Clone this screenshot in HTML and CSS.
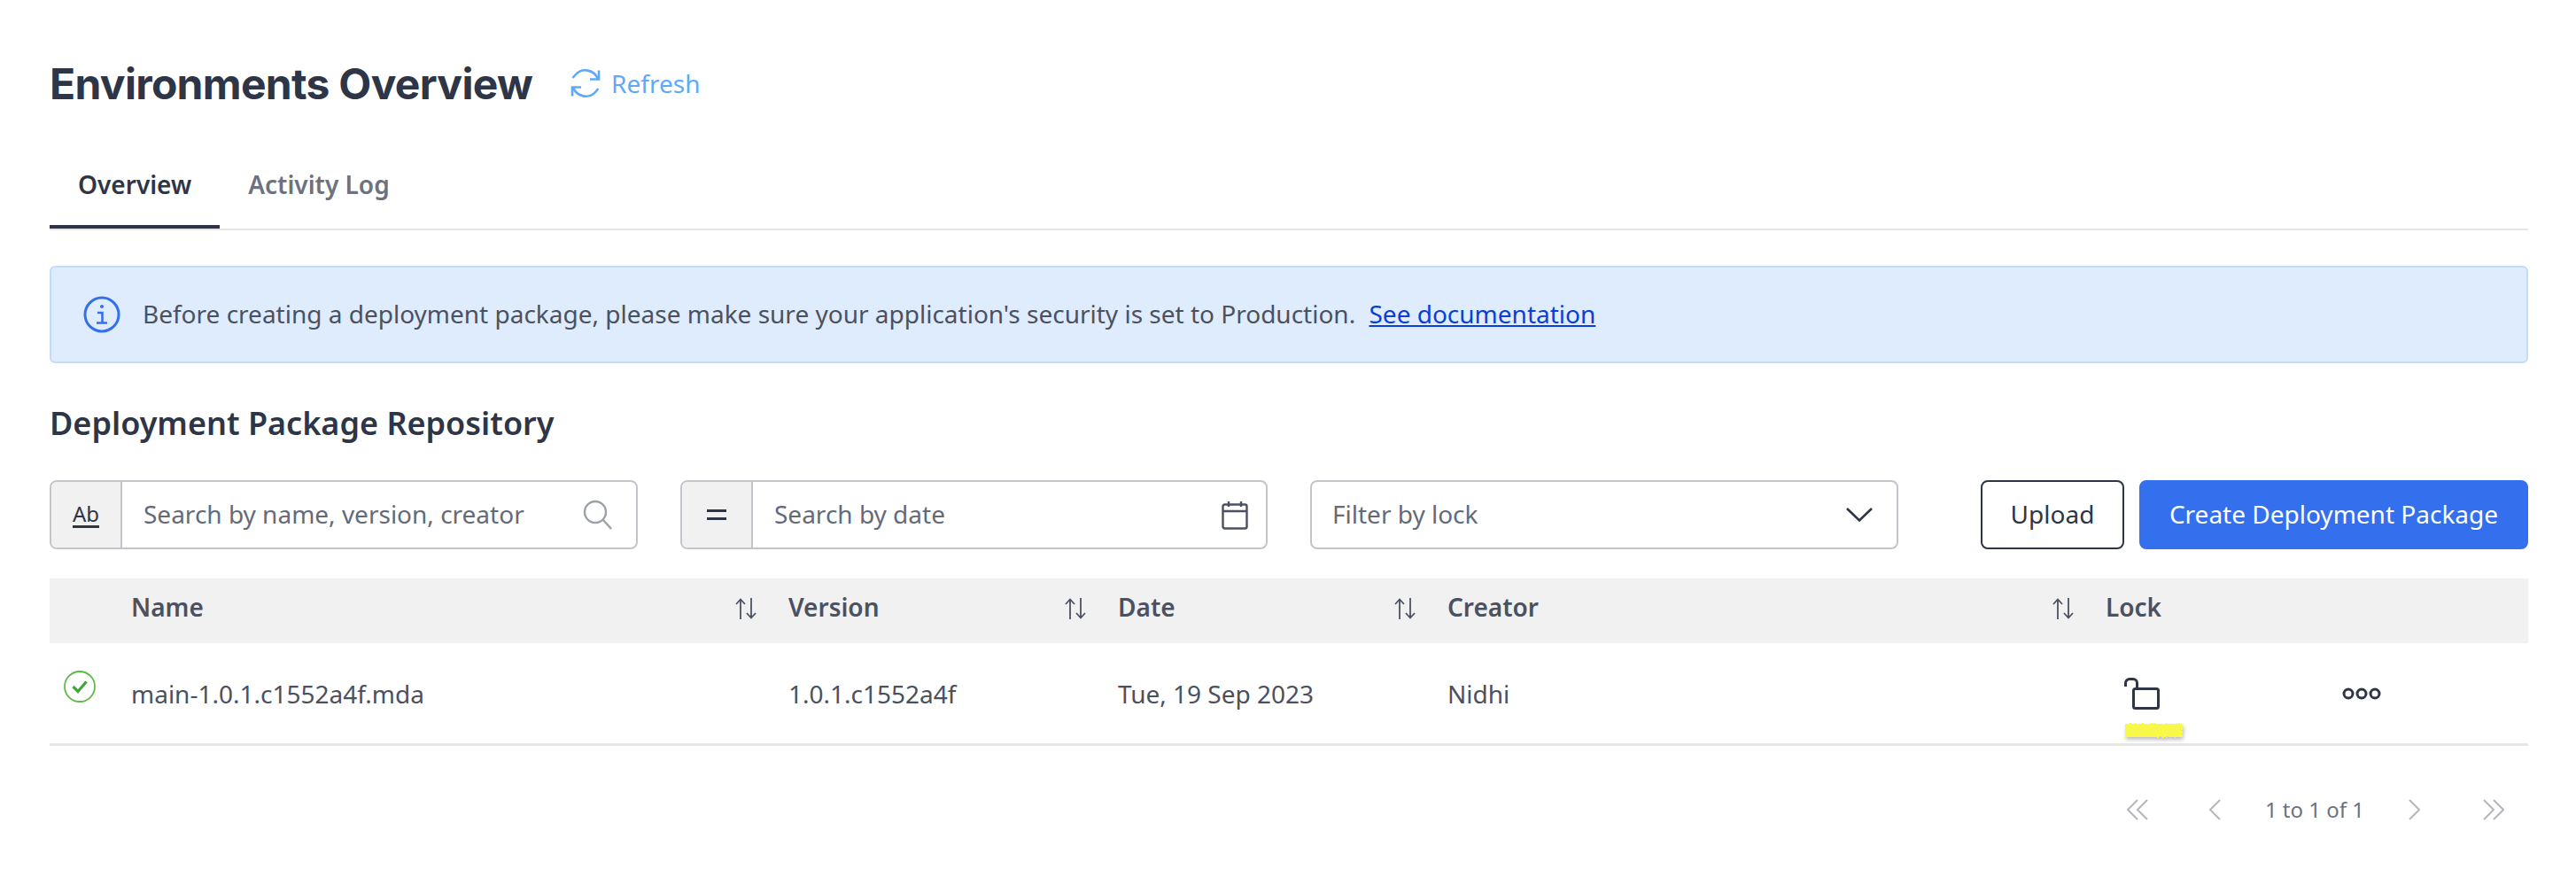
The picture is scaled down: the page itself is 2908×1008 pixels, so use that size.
FILE: index.html
```html
<!DOCTYPE html>
<html lang="en">
<head>
    <meta charset="UTF-8">
    <meta name="viewport" content="width=device-width, initial-scale=1.0">
    <title>Environments Overview</title>
    <link rel="stylesheet" href="styles.css">
</head>
<body>

<header class="title-row">
    <h1>Environments Overview</h1>
    <button class="refresh" type="button">
        <svg width="34" height="34" viewBox="0 0 34 34" fill="none" stroke="currentColor" stroke-width="2.6">
            <path d="M31 12.5A15 15 0 0 0 5.5 7.5L2.500 11"/>
            <path d="M3 21.500A15 15 0 0 0 28.500 26.500L31.500 23"/>
            <path d="M32 2.500V12.500H22"/>
            <path d="M2 31.500V21.500H12"/>
        </svg>
        Refresh
    </button>
</header>

<nav class="tabs">
    <a class="tab active" href="#">Overview</a>
    <a class="tab" href="#">Activity Log</a>
</nav>

<div class="alert">
    <svg class="alert-icon" width="42" height="42" viewBox="0 0 42 42" fill="none" stroke="#3470ee">
        <circle cx="21" cy="21" r="19" stroke-width="3"/>
        <circle cx="21" cy="12" r="2" fill="#3470ee" stroke="none"/>
        <path d="M16 19H21.500V30M15 30.500H27" stroke-width="2.600"/>
    </svg>
    <p>Before creating a deployment package, please make sure your application's security is set to Production. <a href="#">See documentation</a></p>
</div>

<h2>Deployment Package Repository</h2>

<div class="toolbar">
    <div class="field">
        <span class="field-prefix"><span class="ab">Ab</span></span>
        <input type="text" placeholder="Search by name, version, creator">
        <svg class="field-icon" width="34" height="34" viewBox="0 0 34 34" fill="none" stroke="#9ca0a8" stroke-width="2.400">
            <circle cx="14" cy="14" r="12"/>
            <path d="M23 23L32 33"/>
        </svg>
    </div>
    <div class="field date">
        <span class="field-prefix">
            <svg width="22" height="12" viewBox="0 0 22 12" fill="#2e3546">
                <rect width="22" height="3"/>
                <rect y="9" width="22" height="3"/>
            </svg>
        </span>
        <input type="text" placeholder="Search by date">
        <svg class="field-icon cal" width="30" height="33" viewBox="0 0 30 33" fill="none" stroke="#4b5160" stroke-width="2.400">
            <rect x="1.500" y="4.500" width="27" height="27" rx="2"/>
            <path d="M1.500 12H28.500M8 1V7M22 1V7"/>
        </svg>
    </div>
    <div class="field select">
        <span class="select-text">Filter by lock</span>
        <svg width="32" height="18" viewBox="0 0 32 18" fill="none" stroke="#2e3546" stroke-width="2.600">
            <path d="M2 2L16 15.500L30 2"/>
        </svg>
    </div>
    <div class="actions">
        <button class="btn" type="button">Upload</button>
        <button class="btn primary" type="button">Create Deployment Package</button>
    </div>
</div>

<div class="table">
    <div class="row head">
        <div></div>
        <div class="th">Name
            <svg class="sort" width="26" height="24" viewBox="0 0 26 24" fill="none" stroke="#4b5160" stroke-width="1.800"><path d="M7 24V2M2 7L7 1.500L12 7M19 0V22M14 17L19 22.500L24 17"/></svg>
        </div>
        <div class="th">Version
            <svg class="sort" width="26" height="24" viewBox="0 0 26 24" fill="none" stroke="#4b5160" stroke-width="1.800"><path d="M7 24V2M2 7L7 1.500L12 7M19 0V22M14 17L19 22.500L24 17"/></svg>
        </div>
        <div class="th">Date
            <svg class="sort" width="26" height="24" viewBox="0 0 26 24" fill="none" stroke="#4b5160" stroke-width="1.800"><path d="M7 24V2M2 7L7 1.500L12 7M19 0V22M14 17L19 22.500L24 17"/></svg>
        </div>
        <div class="th">Creator
            <svg class="sort" width="26" height="24" viewBox="0 0 26 24" fill="none" stroke="#4b5160" stroke-width="1.800"><path d="M7 24V2M2 7L7 1.500L12 7M19 0V22M14 17L19 22.500L24 17"/></svg>
        </div>
        <div class="th">Lock</div>
        <div></div>
    </div>
    <div class="row body">
        <div class="status">
            <svg width="36" height="36" viewBox="0 0 36 36" fill="none">
                <circle cx="18" cy="18" r="17" stroke="#5dbb46" stroke-width="1.800"/>
                <path d="M10.500 18L16 23.500L25.500 12.500" stroke="#3fa535" stroke-width="3.200"/>
            </svg>
        </div>
        <div>main-1.0.1.c1552a4f.mda</div>
        <div>1.0.1.c1552a4f</div>
        <div>Tue, 19 Sep 2023</div>
        <div>Nidhi</div>
        <div class="lock">
            <svg width="40" height="36" viewBox="0 0 40 36" fill="none" stroke="#2e3546" stroke-width="3">
                <rect x="10.500" y="12.500" width="28" height="22" rx="2"/>
                <path d="M1.500 10V6A4.500 4.500 0 0 1 6 1.500H10A4.500 4.500 0 0 1 14.500 6V12"/>
            </svg>
            <svg class="scribble" width="72" height="24" viewBox="0 0 72 24">
                <filter id="rough" x="-10%" y="-30%" width="120%" height="160%">
                    <feTurbulence type="fractalNoise" baseFrequency="0.5" numOctaves="2" seed="4"/>
                    <feDisplacementMap in="SourceGraphic" scale="4" xChannelSelector="R" yChannelSelector="G"/>
                </filter>
                <rect x="3" y="3" width="65" height="15" fill="#f8f84a" filter="url(#rough)"/>
            </svg>
        </div>
        <div class="more">
            <svg width="44" height="14" viewBox="0 0 44 14" fill="none" stroke="#2e3546" stroke-width="3">
                <circle cx="7" cy="7" r="5"/>
                <circle cx="22" cy="7" r="5"/>
                <circle cx="37" cy="7" r="5"/>
            </svg>
        </div>
    </div>
</div>

<div class="pager">
    <svg class="pager-first" width="24" height="24" viewBox="0 0 24 24" fill="none" stroke="#b4b6bc" stroke-width="2"><path d="M12 1L1 12L12 23M23 1L12 12L23 23"/></svg>
    <svg width="14" height="24" viewBox="0 0 14 24" fill="none" stroke="#b4b6bc" stroke-width="2"><path d="M13 1L2 12L13 23"/></svg>
    <span class="pager-text">1 to 1 of 1</span>
    <svg width="14" height="24" viewBox="0 0 14 24" fill="none" stroke="#b4b6bc" stroke-width="2"><path d="M1 1L12 12L1 23"/></svg>
    <svg class="pager-last" width="24" height="24" viewBox="0 0 24 24" fill="none" stroke="#b4b6bc" stroke-width="2"><path d="M1 1L12 12L1 23M12 1L23 12L12 23"/></svg>
</div>

</body>
</html>
```

FILE: styles.css
```css
* {
    box-sizing: border-box;
}

body {
    margin: 0;
    padding: 0 54px 0 56px;
    background: #fff;
    color: #2e3546;
    font-family: "Noto Sans", Arial, sans-serif;
    font-size: 28px;
}

button, input {
    font-family: inherit;
    font-size: inherit;
}

.title-row {
    display: flex;
    align-items: center;
    height: 164px;
    padding-top: 24px;
}

h1 {
    margin: 0;
    font-family: Inter, "Noto Sans", sans-serif;
    font-size: 48px;
    font-weight: 700;
    letter-spacing: -0.7px;
    color: #2e3546;
}

.refresh {
    display: flex;
    align-items: center;
    gap: 12px;
    margin-left: 43px;
    padding: 0;
    border: none;
    background: none;
    color: #60a8fa;
}

.tabs {
    display: flex;
    border-bottom: 2px solid #e6e6e6;
}

.tab {
    padding: 24px 32px 26px;
    border-bottom: 4px solid transparent;
    line-height: 40px;
    font-weight: 600;
    color: #6b7280;
    text-decoration: none;
}

.tab.active {
    border-bottom-color: #2e3546;
    color: #2e3546;
}

.alert {
    display: flex;
    align-items: center;
    gap: 25px;
    height: 110px;
    margin-top: 40px;
    padding-left: 36px;
    background: #dfecfd;
    border: 2px solid #c3dcfb;
    border-radius: 6px;
    color: #4b5160;
}

.alert p {
    margin: 0 0 2px;
}

.alert a {
    margin-left: 8px;
    color: #0b3fd4;
}

h2 {
    margin: 43px 0 39px;
    font-size: 36px;
    font-weight: 600;
    line-height: 50px;
}

.toolbar {
    display: flex;
    gap: 48px;
    height: 78px;
}

.field {
    display: flex;
    align-items: center;
    width: 664px;
    border: 2px solid #c4c5ca;
    border-radius: 8px;
    overflow: hidden;
}

.field.date {
    width: 663px;
}

.field-prefix {
    display: flex;
    flex: none;
    align-items: center;
    justify-content: center;
    width: 80px;
    height: 100%;
    background: #f1f1f1;
    border-right: 2px solid #c4c5ca;
}

.ab {
    font-size: 24px;
    line-height: 27px;
    border-bottom: 3px solid #2e3546;
}

.field input {
    flex: 1;
    min-width: 0;
    height: 100%;
    padding: 0 0 2px 24px;
    border: none;
    outline: none;
    color: #4b5160;
}

.field input::placeholder {
    color: #646a78;
    opacity: 1;
}

.field-icon {
    flex: none;
    margin-right: 26px;
}

.field-icon.cal {
    margin-right: 20px;
}

.select {
    justify-content: space-between;
    padding: 0 26px 0 23px;
}

.select-text {
    color: #646a78;
    margin-bottom: 2px;
}

.actions {
    display: flex;
    gap: 17px;
    margin-left: auto;
}

.btn {
    width: 162px;
    padding: 0 0 2px;
    background: #fff;
    border: 2px solid #2e3546;
    border-radius: 8px;
    color: #2e3546;
}

.btn.primary {
    width: 439px;
    background: #3470ee;
    border-color: #3470ee;
    color: #fff;
}

.table {
    margin-top: 33px;
}

.row {
    display: grid;
    grid-template-columns: 92px 742px 372px 372px 743px 267px 1fr;
    align-items: center;
}

.head {
    height: 73px;
    padding-bottom: 10px;
    background: #f1f1f1;
    font-weight: 600;
    color: #4b5160;
}

.th {
    display: flex;
    align-items: center;
    justify-content: space-between;
    padding-right: 35px;
}

.sort {
    margin-top: 4px;
}

.body {
    height: 116px;
    border-bottom: 3px solid #e6e6e6;
    color: #4b5160;
}

.status {
    display: flex;
    justify-content: flex-start;
    padding: 0 0 16px 16px;
}

.lock {
    position: relative;
    padding-left: 21px;
    line-height: 0;
}

.scribble {
    position: absolute;
    left: 19px;
    top: 49px;
    filter: drop-shadow(1px 3px 2px #00000040);
}

.more {
    line-height: 0;
}

.pager {
    display: flex;
    align-items: center;
    justify-content: flex-end;
    gap: 50px;
    margin-top: 55px;
    padding-right: 27px;
    color: #6b7280;
}

.pager-first {
    margin-right: 18px;
}

.pager-last {
    margin-left: 20px;
}

.pager-text {
    font-size: 24px;
}
```
